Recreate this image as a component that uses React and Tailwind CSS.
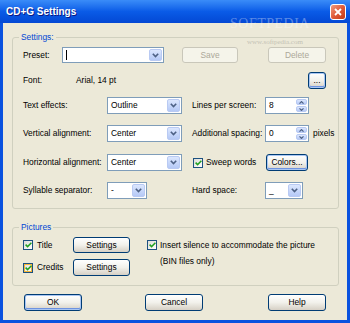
import React from "react";

function XpButton({ children, className = "", disabled = false, focus = false }) {
  const look = disabled
    ? "border-[#C9C7BA] bg-[#F5F4EA] text-[#ACA899]"
    : "border-[#003C74] bg-linear-to-b from-[#FFFFFF] via-[#F2F1EB] to-[#D6D0C5] text-black";
  const ring = focus ? "shadow-[inset_0_0_0_1px_#A9C6F3,inset_0_-1px_0_1px_#6E93E0]" : "";
  return (
    <div className={`flex items-center justify-center rounded-[3px] border text-[8.4px] leading-none ${look} ${ring} ${className}`}>
      {children}
    </div>
  );
}

function Chevron() {
  return (
    <svg width="7" height="5" viewBox="0 0 7 5">
      <path d="M0.8 0.8 L3.5 3.6 L6.2 0.8" stroke="#4D6185" strokeWidth="1.6" fill="none" />
    </svg>
  );
}

function Combo({ value, caret = false, className = "" }) {
  return (
    <div className={`flex h-full items-stretch border border-[#7F9DB9] bg-white ${className}`}>
      <span className="flex flex-1 items-center pl-[3px] text-[8.4px] leading-none">
        {caret ? <span className="h-[10px] w-px bg-black" /> : value}
      </span>
      <span className="m-px flex w-[13px] items-center justify-center rounded-[2px] border border-[#B9CAF3] bg-linear-to-b from-[#DCE7FE] to-[#B5C9F6]">
        <Chevron />
      </span>
    </div>
  );
}

function Spin({ value, className = "" }) {
  return (
    <div className={`flex h-full items-stretch border border-[#7F9DB9] bg-white ${className}`}>
      <span className="flex flex-1 items-center pl-[3px] text-[8.4px] leading-none">{value}</span>
      <span className="m-px flex w-[11px] flex-col gap-px">
        <span className="flex flex-1 items-center justify-center rounded-[2px] border border-[#B9CAF3] bg-linear-to-b from-[#DCE7FE] to-[#B5C9F6]">
          <svg width="5" height="3" viewBox="0 0 5 3">
            <path d="M0.5 2.6 L2.5 0.6 L4.5 2.6" stroke="#4D6185" strokeWidth="1.2" fill="none" />
          </svg>
        </span>
        <span className="flex flex-1 items-center justify-center rounded-[2px] border border-[#B9CAF3] bg-linear-to-b from-[#DCE7FE] to-[#B5C9F6]">
          <svg width="5" height="3" viewBox="0 0 5 3">
            <path d="M0.5 0.4 L2.5 2.4 L4.5 0.4" stroke="#4D6185" strokeWidth="1.2" fill="none" />
          </svg>
        </span>
      </span>
    </div>
  );
}

function Check({ hover = false }) {
  return (
    <span
      className={`flex h-[10px] w-[10px] shrink-0 items-center justify-center border border-[#1C5180] bg-linear-to-br from-[#DCDCD7] to-white ${
        hover ? "shadow-[inset_0_0_0_1px_#F8B636]" : ""
      }`}
    >
      <svg width="7" height="6" viewBox="0 0 7 6">
        <path d="M0.6 2.6 L2.6 4.6 L6.4 0.8" stroke="#21A121" strokeWidth="1.5" fill="none" />
      </svg>
    </span>
  );
}

function Group({ title, className = "", children }) {
  return (
    <div className={`relative ml-[9px] w-[327px] rounded-[3px] border border-[#D0D0BF] ${className}`}>
      <span className="absolute -top-[6px] left-[6px] bg-[#ECE9D8] px-[2px] text-[8.4px] leading-[11px] text-[#0046D5]">
        {title}
      </span>
      {children}
    </div>
  );
}

export default function App() {
  return (
    <div className="relative flex h-[323px] w-[350px] flex-col bg-[#0A52DF] font-['Liberation_Sans',Arial,sans-serif] text-black">
      {/* title bar */}
      <div className="flex h-[23px] items-center justify-between bg-linear-to-b from-[#3A8CF8] via-[#0A5BE7] to-[#0448D4] pl-[6px] pr-[4px]">
        <span className="text-[10px] font-bold text-white [text-shadow:1px_1px_0_#0A1883]">CD+G Settings</span>
        <span className="flex h-[16px] w-[16px] items-center justify-center rounded-[3px] border border-white bg-linear-to-br from-[#EE9A7E] via-[#E05A38] to-[#C23A14]">
          <svg width="8" height="8" viewBox="0 0 8 8">
            <path d="M1 1 L7 7 M7 1 L1 7" stroke="white" strokeWidth="1.8" />
          </svg>
        </span>
      </div>

      {/* body */}
      <div className="mx-[3px] mb-[3px] flex flex-1 flex-col bg-[#ECE9D8] text-[8.4px] leading-none">
        <Group title="Settings:" className="mt-[14px] h-[172px]">
          <div className="mt-[9px] flex h-[16px] items-center pl-[10px]">
            <span className="w-[39px]">Preset:</span>
            <Combo caret className="w-[102px]" />
            <XpButton disabled className="ml-[18px] h-full w-[56px]">Save</XpButton>
            <XpButton disabled className="ml-[30px] h-full w-[58px]">Delete</XpButton>
          </div>

          <div className="mt-[9px] flex h-[17px] items-center pl-[10px]">
            <span className="w-[53px]">Font:</span>
            <span className="w-[232px]">Arial, 14 pt</span>
            <XpButton focus className="h-full w-[18px]">...</XpButton>
          </div>

          <div className="mt-[8px] flex h-[17px] items-center pl-[10px]">
            <span className="w-[84px]">Text effects:</span>
            <Combo value="Outline" className="w-[75px]" />
            <span className="ml-[10px] w-[73px]">Lines per screen:</span>
            <Spin value="8" className="w-[44px]" />
          </div>

          <div className="mt-[11px] flex h-[17px] items-center pl-[10px]">
            <span className="w-[84px]">Vertical alignment:</span>
            <Combo value="Center" className="w-[75px]" />
            <span className="ml-[10px] w-[73px]">Additional spacing:</span>
            <Spin value="0" className="w-[44px]" />
            <span className="ml-[4px]">pixels</span>
          </div>

          <div className="mt-[12px] flex h-[17px] items-center pl-[10px]">
            <span className="w-[84px]">Horizontal alignment:</span>
            <Combo value="Center" className="w-[75px]" />
            <span className="ml-[10px] flex w-[74px] items-center gap-[3px] pl-px">
              <Check />
              <span>Sweep words</span>
            </span>
            <XpButton focus className="h-full w-[42px]">Colors...</XpButton>
          </div>

          <div className="mt-[11px] flex h-[17px] items-center pl-[10px]">
            <span className="w-[84px]">Syllable separator:</span>
            <span className="flex h-full w-[75px]">
              <Combo value="-" className="w-[40px]" />
            </span>
            <span className="ml-[10px] w-[73px]">Hard space:</span>
            <Combo value="_" className="w-[38px]" />
          </div>
        </Group>

        <Group title="Pictures" className="mt-[18px] flex h-[59px] pl-[10px]">
          <div className="flex w-[124px] flex-col">
            <div className="mt-[9px] flex h-[16px] items-center">
              <span className="flex w-[50px] items-center gap-[4px]">
                <Check />
                <span>Title</span>
              </span>
              <XpButton className="h-full w-[57px]">Settings</XpButton>
            </div>
            <div className="mt-[6px] flex h-[17px] items-center">
              <span className="flex w-[50px] items-center gap-[4px]">
                <Check hover />
                <span>Credits</span>
              </span>
              <XpButton className="h-full w-[57px]">Settings</XpButton>
            </div>
          </div>
          <div className="mt-[9px] flex items-start gap-[3px]">
            <span className="mt-[3px]">
              <Check />
            </span>
            <p className="leading-[16px]">
              Insert silence to accommodate the picture
              <br />
              (BIN files only)
            </p>
          </div>
        </Group>

        <div className="mt-[8px] flex h-[17px] pl-[21px]">
          <XpButton focus className="h-full w-[58px]">OK</XpButton>
          <XpButton className="ml-[63px] h-full w-[58px]">Cancel</XpButton>
          <XpButton className="ml-[65px] h-full w-[58px]">Help</XpButton>
        </div>
      </div>

      {/* watermark */}
      <span className="pointer-events-none absolute left-[230px] top-[17px] font-['Liberation_Serif',serif] text-[14px] leading-none tracking-[0.5px] text-white/35">
        SOFTPEDIA
      </span>
      <span className="pointer-events-none absolute left-[247px] top-[39px] font-['Liberation_Serif',serif] text-[7px] leading-none text-[#C4C2B5]">
        www.softpedia.com
      </span>
    </div>
  );
}
